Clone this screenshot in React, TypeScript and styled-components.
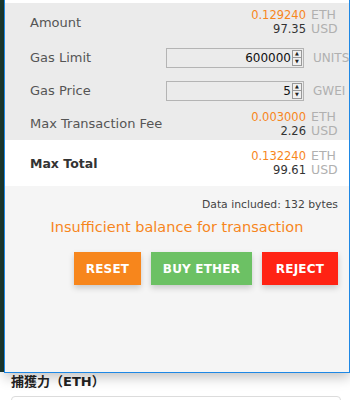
import styled, { createGlobalStyle } from "styled-components";

const Global = createGlobalStyle`
  html, body {
    margin: 0;
    padding: 0;
    background: #fff;
    font-family: "DejaVu Sans", "Noto Sans CJK JP", sans-serif;
  }
`;

const Page = styled.div`
  position: relative;
  width: 350px;
  height: 400px;
  overflow: hidden;
  background: #fff;
`;

const Hero = styled.div`
  height: 372px;
  background: #1c3a30;
`;

const Form = styled.div`
  padding: 2px 11px 0;
  label {
    display: block;
    font-size: 13px;
    font-weight: bold;
    color: #222;
    line-height: 16px;
  }
  div {
    margin-top: 6px;
    height: 30px;
    border: 1px solid #dcdcdc;
    border-radius: 4px;
    width: 328px;
  }
`;

const Popup = styled.div`
  position: absolute;
  left: 4px;
  top: -1px;
  width: 344px;
  height: 372px;
  border: 1px solid #1e88e5;
  background: #f5f5f5;
  box-shadow: 0 4px 12px rgba(0, 0, 0, 0.25);
  display: flex;
  flex-direction: column;
`;

const TopStrip = styled.div`
  height: 3px;
  background: #fff;
`;

const GreySection = styled.div`
  background: #ebebeb;
`;

const Row = styled.div<{ $h: number }>`
  height: ${(p) => p.$h}px;
  display: flex;
  align-items: center;
  justify-content: space-between;
  padding: 0 11px 0 25px;
`;

const Label = styled.span<{ $bold?: boolean }>`
  font-size: ${(p) => (p.$bold ? "12.5px" : "13px")};
  color: ${(p) => (p.$bold ? "#333" : "#555")};
  font-weight: ${(p) => (p.$bold ? "bold" : "normal")};
`;

const Values = styled.div`
  display: flex;
  flex-direction: column;
  align-items: flex-end;
  font-size: 11.5px;
  line-height: 13px;
`;

const Eth = styled.span`
  color: #f7861c;
`;

const Usd = styled.span`
  color: #333;
`;

const Unit = styled.span`
  color: #b0b0b0;
  display: inline-block;
  font-size: 12.5px;
  width: 27px;
  margin-left: 5px;
`;

const InputWrap = styled.div`
  display: flex;
  align-items: center;
  margin-right: -8px;
`;

const NumberBox = styled.div`
  width: 135px;
  height: 18px;
  border: 1px solid #b4b4b4;
  background: #ebebeb;
  display: flex;
  align-items: center;
  justify-content: flex-end;
  font-size: 12px;
  color: #111;
  padding-right: 1px;
`;

const Spinner = styled.div`
  width: 10px;
  height: 16px;
  margin-left: 1px;
  border: 1px solid #999;
  background: #f0f0f0;
  display: flex;
  flex-direction: column;
  box-sizing: border-box;
  span {
    flex: 1;
    display: flex;
    align-items: center;
    justify-content: center;
    font-size: 5px;
    color: #222;
    line-height: 1;
  }
  span + span {
    border-top: 1px solid #999;
  }
`;

const UnitLabel = styled.span`
  font-size: 12px;
  color: #b0b0b0;
  width: 33px;
  margin-left: 9px;
`;

const WhiteSection = styled.div`
  background: #fff;
`;

const Body = styled.div`
  padding: 12px 11px 0;
  display: flex;
  flex-direction: column;
`;

const DataNote = styled.div`
  text-align: right;
  font-size: 10.8px;
  color: #444;
`;

const Warning = styled.div`
  text-align: center;
  color: #f7861c;
  font-size: 14.5px;
  margin-top: 8px;
`;

const Buttons = styled.div`
  display: flex;
  justify-content: flex-end;
  gap: 10px;
  margin-top: 17px;
`;

const Button = styled.button<{ $color: string; $w: number }>`
  width: ${(p) => p.$w}px;
  height: 33px;
  padding: 0;
  border: none;
  background: ${(p) => p.$color};
  color: #fff;
  font-family: "DejaVu Sans", sans-serif;
  font-weight: bold;
  font-size: 12px;
  letter-spacing: 0.2px;
  box-shadow: 0 3px 6px rgba(0, 0, 0, 0.18);
`;

function Amount({ eth, usd }: { eth: string; usd: string }) {
  return (
    <Values>
      <span>
        <Eth>{eth}</Eth>
        <Unit>ETH</Unit>
      </span>
      <span>
        <Usd>{usd}</Usd>
        <Unit>USD</Unit>
      </span>
    </Values>
  );
}

function NumberField({ value, unit }: { value: string; unit: string }) {
  return (
    <InputWrap>
      <NumberBox>
        {value}
        <Spinner>
          <span>▲</span>
          <span>▼</span>
        </Spinner>
      </NumberBox>
      <UnitLabel>{unit}</UnitLabel>
    </InputWrap>
  );
}

export default function App() {
  return (
    <Page>
      <Global />
      <Hero />
      <Form>
        <label>捕獲力（ETH）</label>
        <div />
      </Form>
      <Popup>
        <TopStrip />
        <GreySection>
          <Row $h={38}>
            <Label>Amount</Label>
            <Amount eth="0.129240" usd="97.35" />
          </Row>
          <Row $h={33}>
            <Label>Gas Limit</Label>
            <NumberField value="600000" unit="UNITS" />
          </Row>
          <Row $h={33}>
            <Label>Gas Price</Label>
            <NumberField value="5" unit="GWEI" />
          </Row>
          <Row $h={33}>
            <Label>Max Transaction Fee</Label>
            <Amount eth="0.003000" usd="2.26" />
          </Row>
        </GreySection>
        <WhiteSection>
          <Row $h={46}>
            <Label $bold>Max Total</Label>
            <Amount eth="0.132240" usd="99.61" />
          </Row>
        </WhiteSection>
        <Body>
          <DataNote>Data included: 132 bytes</DataNote>
          <Warning>Insufficient balance for transaction</Warning>
          <Buttons>
            <Button $color="#f7861c" $w={67}>RESET</Button>
            <Button $color="#6cc164" $w={101}>BUY ETHER</Button>
            <Button $color="#ff2314" $w={76}>REJECT</Button>
          </Buttons>
        </Body>
      </Popup>
    </Page>
  );
}
